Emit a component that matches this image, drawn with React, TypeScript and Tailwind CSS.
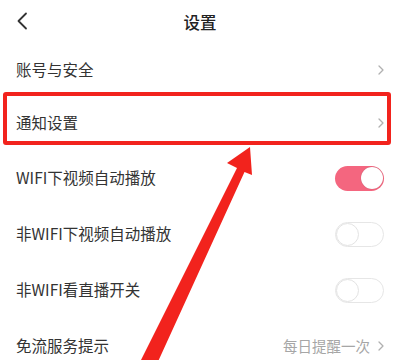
import React from "react";

const Chevron = () => (
  <svg width="6" height="10" viewBox="0 0 6 10" className="shrink-0">
    <path d="M1 1l4 4-4 4" fill="none" stroke="#b0b0b0" strokeWidth="1.3" strokeLinecap="round" strokeLinejoin="round" />
  </svg>
);

const Toggle = ({ on }: { on: boolean }) =>
  on ? (
    <div className="flex h-[25px] w-[49px] items-center justify-end rounded-full bg-[#f4667f] p-[1.5px]">
      <div className="h-[22px] w-[22px] rounded-full bg-white shadow-[0_0_1px_rgba(0,0,0,0.3)]" />
    </div>
  ) : (
    <div className="flex h-[25px] w-[49px] items-center justify-start rounded-full border border-[#e6e6e6] bg-white">
      <div className="h-[23px] w-[23px] rounded-full border border-[#e3e3e3] bg-white" />
    </div>
  );

const Row = ({ label, h, right }: { label: string; h: string; right: React.ReactNode }) => (
  <div className={`flex items-center justify-between pl-4 pr-4 ${h}`}>
    <span className="text-[15.5px] text-[#333]">{label}</span>
    {right}
  </div>
);

export default function App() {
  return (
    <div
      className="relative h-[360px] w-[400px] overflow-hidden bg-white"
      style={{ fontFamily: '"Noto Sans CJK SC", "Noto Sans", sans-serif' }}
    >
      <div className="relative flex h-[44px] items-center justify-center">
        <svg width="12" height="18" viewBox="0 0 12 18" className="absolute left-[16px] top-[12px]">
          <path d="M10 1.5L2.5 9l7.5 7.5" fill="none" stroke="#333" strokeWidth="1.8" strokeLinecap="round" strokeLinejoin="round" />
        </svg>
        <span className="text-[16.5px] font-medium text-[#222]">设置</span>
      </div>
      <Row label="账号与安全" h="h-[52px]" right={<Chevron />} />
      <Row label="通知设置" h="h-[54px]" right={<Chevron />} />
      <Row label="WIFI下视频自动播放" h="h-14" right={<Toggle on />} />
      <Row label="非WIFI下视频自动播放" h="h-14" right={<Toggle on={false} />} />
      <Row label="非WIFI看直播开关" h="h-14" right={<Toggle on={false} />} />
      <Row
        label="免流服务提示"
        h="h-14"
        right={
          <div className="flex items-center gap-[8px]">
            <span className="text-[14.5px] text-[#a6a6a6]">每日提醒一次</span>
            <Chevron />
          </div>
        }
      />

      <div className="absolute left-[3px] top-[92px] h-[53px] w-[388px] rounded-[3px] border-4 border-[#f2231d]" />

      <svg width="400" height="360" viewBox="0 0 400 360" className="pointer-events-none absolute left-0 top-0">
        <polygon
          points="250,147 252,175 244.5,172 156,366 141,360 237,168 227,163"
          fill="#f2231d"
        />
      </svg>
    </div>
  );
}
